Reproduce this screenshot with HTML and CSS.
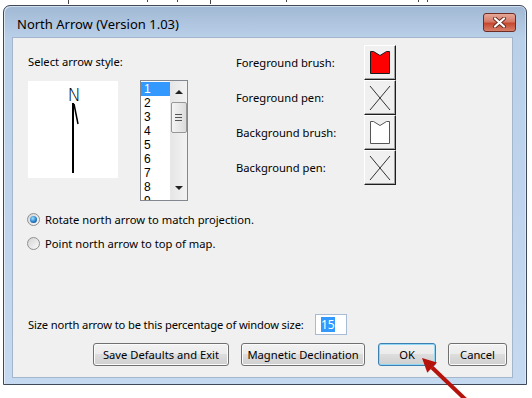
FILE: index.html
```html
<!DOCTYPE html>
<html lang="en">
<head>
    <meta charset="UTF-8">
    <meta name="viewport" content="width=device-width, initial-scale=1.0">
    <title>North Arrow (Version 1.03)</title>
    <link rel="stylesheet" href="styles.css">
</head>
<body>
<!-- bits of the page behind the dialog -->
<div class="backdrop">
    <span class="tick t1"></span>
    <span class="tick t2"></span>
    <span class="tick t3"></span>
    <span class="tick t4"></span>
    <span class="tick t5"></span>
    <span class="tick t6"></span>
    <span class="tick t7"></span>
</div>

<div class="window">
    <div class="titlebar">
        <span class="title">North Arrow (Version 1.03)</span>
        <div class="close">
            <svg width="15" height="11" viewBox="0 0 15 11">
                <path d="M3 1.5L12 9.5M12 1.5L3 9.5" stroke="#6b2a20" stroke-width="4" stroke-linecap="round"/>
                <path d="M3 1.5L12 9.5M12 1.5L3 9.5" stroke="#ffffff" stroke-width="2.2" stroke-linecap="round"/>
            </svg>
        </div>
    </div>

    <div class="client">
        <div class="top">
            <div class="style-col">
                <div class="label">Select arrow style:</div>
                <div class="picker">
                    <div class="preview">
                        <svg width="90" height="97" viewBox="0 0 90 97">
                            <text x="39.5" y="20" class="north">N</text>
                            <line x1="45" y1="22" x2="45" y2="92" stroke="#000" stroke-width="2"/>
                            <line x1="46" y1="23" x2="50" y2="43" stroke="#000" stroke-width="1.5"/>
                        </svg>
                    </div>
                    <div class="listbox">
                        <ul class="items">
                            <li class="selected">1</li>
                            <li>2</li>
                            <li>3</li>
                            <li>4</li>
                            <li>5</li>
                            <li>6</li>
                            <li>7</li>
                            <li>8</li>
                            <li>9</li>
                        </ul>
                        <div class="scrollbar">
                            <span class="arrow-up"></span>
                            <div class="thumb"><span class="grip"></span></div>
                            <span class="arrow-down"></span>
                        </div>
                    </div>
                </div>
            </div>

            <div class="brushes">
                <div class="brush-row">
                    <span class="brush-label">Foreground brush:</span>
                    <div class="swatch">
                        <svg width="20" height="23" viewBox="0 0 20 23">
                            <path d="M0.5 0.5H3.5L10 4.5L16.5 0.5H19.5V22.5H0.5Z" fill="#ff0000" stroke="#1a1a1a"/>
                        </svg>
                    </div>
                </div>
                <div class="brush-row">
                    <span class="brush-label">Foreground pen:</span>
                    <div class="swatch">
                        <svg width="22" height="26" viewBox="0 0 22 26">
                            <path d="M1 1L21 25M21 1L1 25" stroke="#333" stroke-width="1"/>
                        </svg>
                    </div>
                </div>
                <div class="brush-row">
                    <span class="brush-label">Background brush:</span>
                    <div class="swatch">
                        <svg width="20" height="23" viewBox="0 0 20 23">
                            <path d="M0.5 0.5H3.5L10 4.5L16.5 0.5H19.5V22.5H0.5Z" fill="#ffffff" stroke="#555"/>
                        </svg>
                    </div>
                </div>
                <div class="brush-row">
                    <span class="brush-label">Background pen:</span>
                    <div class="swatch">
                        <svg width="22" height="26" viewBox="0 0 22 26">
                            <path d="M1 1L21 25M21 1L1 25" stroke="#333" stroke-width="1"/>
                        </svg>
                    </div>
                </div>
            </div>
        </div>

        <div class="options">
            <label class="option"><span class="radio checked"></span>Rotate north arrow to match projection.</label>
            <label class="option"><span class="radio"></span>Point north arrow to top of map.</label>
        </div>

        <div class="spacer"></div>

        <div class="size-row">
            <span class="size-label">Size north arrow to be this percentage of window size:</span>
            <div class="pct"><span class="sel">15</span></div>
        </div>

        <div class="buttons">
            <button class="btn save">Save Defaults and Exit</button>
            <button class="btn magnetic">Magnetic Declination</button>
            <button class="btn ok">OK</button>
            <button class="btn cancel">Cancel</button>
        </div>
    </div>
</div>

<!-- red pointer over the OK button -->
<svg class="pointer" width="60" height="48" viewBox="0 0 60 48">
    <line x1="22" y1="17.5" x2="56" y2="50" stroke="#b5120c" stroke-width="4"/>
    <polygon points="12,8 27,12.6 17.3,22.8" fill="#b5120c"/>
</svg>
</body>
</html>
```

FILE: styles.css
```css
* {
    box-sizing: border-box;
}

body {
    margin: 0;
    width: 532px;
    height: 398px;
    overflow: hidden;
    position: relative;
    background-color: #fff;
    font-family: "Noto Sans", sans-serif;
    font-size: 11.2px;
    color: #000;
}

.backdrop {
    height: 5px;
    display: flex;
    align-items: flex-start;
}

.tick {
    width: 1px;
    height: 4px;
    background-color: #444;
}

.t1 { margin-left: 68px; }
.t2 { margin-left: 78px; height: 2px; }
.t3 { margin-left: 29px; height: 2px; }
.t4 { margin-left: 32px; }
.t5 { margin-left: 75px; height: 2px; }
.t6 { margin-left: 131px; height: 2px; }
.t7 { margin-left: 8px; height: 2px; }

.window {
    margin-left: 3px;
    width: 524px;
    height: 380px;
    border: 1px solid #3e4a5a;
    border-radius: 7px 7px 0 0;
    background: linear-gradient(#a1b8d4, #bad0e9 32px, #c5d9f0);
    box-shadow: inset 1px 1px 0 rgba(255, 255, 255, 0.55), inset -1px 0 0 rgba(255, 255, 255, 0.4);
}

.titlebar {
    height: 31px;
    display: flex;
    justify-content: space-between;
    align-items: flex-start;
    padding: 0 10px 0 13px;
}

.title {
    margin-top: 9px;
    font-size: 13px;
    line-height: 18px;
}

.close {
    margin-top: 7px;
    width: 33px;
    height: 19px;
    border: 1px solid #6d2c24;
    border-radius: 3px;
    background: linear-gradient(#e6a898, #d57a68 45%, #c5492f 55%, #d8806b);
    display: flex;
    align-items: center;
    justify-content: center;
}

.client {
    margin-left: 8px;
    width: 501px;
    height: 341px;
    background-color: #f0f0f0;
    border: 1px solid #a3b6cc;
    display: flex;
    flex-direction: column;
}

.top {
    display: flex;
    align-items: flex-start;
    padding: 7px 0 0 15px;
}

.label {
    margin-top: 9px;
    line-height: 16px;
}

.picker {
    margin-top: 10px;
    display: flex;
    align-items: flex-start;
}

.preview {
    margin-top: 1px;
    width: 90px;
    height: 97px;
    background-color: #fff;
}

.preview svg {
    display: block;
}

.north {
    font-family: "DejaVu Sans", sans-serif;
    font-weight: 200;
    font-size: 18px;
    fill: #000;
}

.listbox {
    margin-left: 22px;
    width: 48px;
    height: 121px;
    border: 1px solid #828790;
    background-color: #fff;
    display: flex;
    overflow: hidden;
}

.items {
    list-style: none;
    margin: 1px 0 0;
    padding: 0;
    width: 29px;
    font-family: "Liberation Sans", sans-serif;
    font-size: 12px;
}

.items li {
    height: 14px;
    line-height: 14px;
    padding-left: 3px;
}

.items li.selected {
    background-color: #3399ff;
    color: #fff;
}

.scrollbar {
    width: 17px;
    background: linear-gradient(90deg, #e6e6e6, #f2f2f2);
    display: flex;
    flex-direction: column;
    align-items: center;
    padding-top: 9px;
}

.arrow-up {
    width: 0;
    height: 0;
    border-left: 4px solid transparent;
    border-right: 4px solid transparent;
    border-bottom: 4px solid #222;
}

.thumb {
    margin-top: 8px;
    width: 16px;
    height: 31px;
    border: 1px solid #979797;
    border-radius: 2px;
    background: linear-gradient(90deg, #f4f4f4, #dcdcdc);
    display: flex;
    align-items: center;
    justify-content: center;
}

.grip {
    width: 7px;
    height: 7px;
    border-top: 1px solid #555;
    border-bottom: 1px solid #555;
    background: linear-gradient(#555, #555) center / 7px 1px no-repeat;
}

.arrow-down {
    margin-top: 53px;
    width: 0;
    height: 0;
    border-left: 4px solid transparent;
    border-right: 4px solid transparent;
    border-top: 4px solid #222;
}

.brushes {
    margin-left: 48px;
    display: flex;
    flex-direction: column;
}

.brush-row {
    display: flex;
    align-items: center;
    height: 35px;
}

.brush-label {
    width: 128px;
}

.swatch {
    width: 32px;
    height: 35px;
    background-color: #f0f0f0;
    border-top: 1px solid #fff;
    border-left: 1px solid #fff;
    border-right: 1px solid #1e1e1e;
    border-bottom: 1px solid #1e1e1e;
    box-shadow: inset -1px -1px 0 #a0a0a0;
    display: flex;
    align-items: center;
    justify-content: center;
}

.swatch svg {
    display: block;
}

.options {
    margin-top: 10px;
    padding-left: 14px;
    display: flex;
    flex-direction: column;
    gap: 8px;
}

.option {
    display: flex;
    align-items: center;
    height: 16px;
}

.radio {
    width: 13px;
    height: 13px;
    margin-right: 5px;
    border: 1px solid #8e8f8f;
    border-radius: 50%;
    background: linear-gradient(135deg, #d4d4d4, #fafafa);
    display: flex;
    align-items: center;
    justify-content: center;
}

.radio.checked::after {
    content: "";
    width: 7px;
    height: 7px;
    border-radius: 50%;
    background: radial-gradient(circle at 40% 35%, #9ae4ff, #1f74c6 60%, #0e3f79);
}

.spacer {
    flex: 1;
}

.size-row {
    display: flex;
    align-items: center;
    height: 21px;
    padding-left: 15px;
}

.size-label {
    width: 287px;
    white-space: nowrap;
    letter-spacing: -0.15px;
}

.pct {
    width: 32px;
    height: 21px;
    border: 1px solid #a7bbd6;
    background-color: #fff;
    display: flex;
    align-items: center;
    padding-left: 5px;
    font-size: 12px;
}

.sel {
    background-color: #3399ff;
    color: #fff;
    line-height: 15px;
}

.buttons {
    margin-top: 8px;
    margin-bottom: 11px;
    display: flex;
    justify-content: flex-end;
    gap: 12px;
    padding-right: 5px;
}

.btn {
    height: 23px;
    padding: 0;
    border: 1px solid #707070;
    border-radius: 3px;
    background: linear-gradient(#f2f2f2, #ebebeb 50%, #dddddd 50%, #cfcfcf);
    box-shadow: inset 0 0 0 1px #fbfbfb;
    font-family: inherit;
    font-size: 11.2px;
    color: #000;
}

.save { width: 136px; }
.magnetic { width: 124px; }
.ok {
    width: 58px;
    margin-left: 1px;
    border-color: #3c7fb1;
    box-shadow: inset 0 0 0 1px #8fd6f7;
}
.cancel { width: 59px; }

.pointer {
    position: absolute;
    left: 410px;
    top: 350px;
}
```
